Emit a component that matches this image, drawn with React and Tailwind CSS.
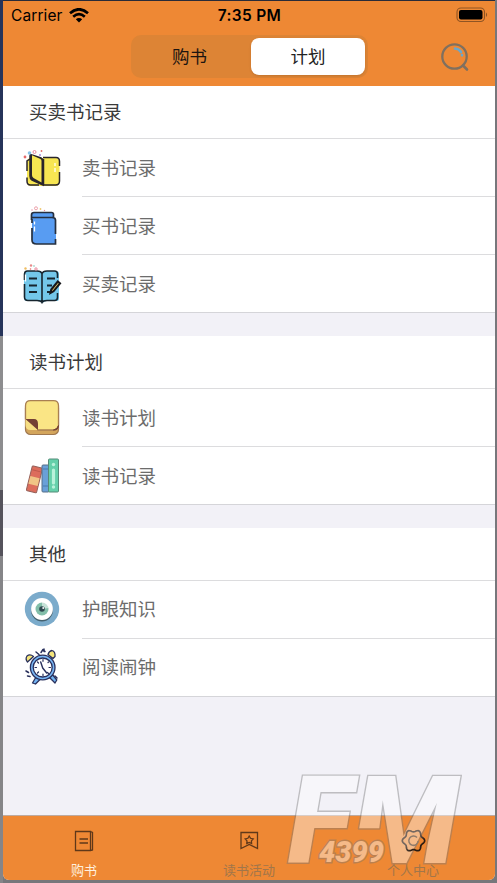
const YellowBook = () => (
  <svg width="40" height="40" viewBox="0 0 40 40" fill="none">
    <rect x="5" y="10" width="32.500" height="28" rx="4" fill="#F7E652" />
    <path d="M21 9.500h13q3.500 0 3.500 4v4.500M37.500 24v9q0 4-4 4H21M17 37H8.500q-3.500 0-3.500-4v-3.500M5 23V13l3-2" stroke="#29252b" strokeWidth="1.500" />
    <path d="M8 8q0-2 2-1l9 3q2 1 2 3v24l-11-5q-2-1-2-4z" fill="#29252b" stroke="#29252b" strokeWidth="1.500" />
    <path d="M10 7.200l8.500 3.800q1 .5 1 2v21.500l-8-4.500q-1.500-1-1.500-3z" fill="#F7E652" />
    <path d="M21.500 11v26" stroke="#29252b" strokeWidth="1.500" />
    <path d="M33 15v3M33 20v4" stroke="#fffbe0" strokeWidth="1.500" />
    <circle cx="3" cy="9" r="1.400" fill="#e46b6b" />
    <circle cx="7.500" cy="5" r="1.800" fill="#86c2e6" />
    <circle cx="12.500" cy="4" r="1.500" stroke="#e88b9e" />
    <circle cx="18" cy="7" r=".9" fill="#9a7ddb" />
    <circle cx="19.500" cy="3" r=".9" fill="#e46b6b" />
  </svg>
);

const BlueBook = () => (
  <svg width="40" height="40" viewBox="0 0 40 40" fill="none">
    <path d="M10 8q0-1.500 2-1.500h18q2 0 2 2V12l2 1v24q0 1-2 1H14q-4 0-4-4z" fill="#589CF2" />
    <path d="M9.500 14V9q0-2.500 2.500-2.500h17.500q2 0 2 2V11M10 11.500h20q3.500 0 3.500 2.500v14M33.500 33v5H14.500q-4.500 0-4.500-4V22M10 13v4" stroke="#26303f" strokeWidth="1.700" />
    <path d="M12.500 15.500v3M12.500 20.500v5" stroke="#fff" strokeWidth="1.300" />
    <circle cx="14" cy="2.300" r="1.500" stroke="#eba0aa" />
    <circle cx="18.500" cy="3" r=".9" fill="#efc86f" />
    <circle cx="22.500" cy="4.500" r=".7" fill="#e88b9e" />
    <circle cx="10" cy="4" r=".7" fill="#e88b9e" />
  </svg>
);

const OpenBook = () => (
  <svg width="40" height="40" viewBox="0 0 40 40" fill="none">
    <path d="M2 10q0-3 3-3h11q4 0 5 2 1-2 4-2h9q3 0 3 3v25q0 2-3 2h-9q-3 0-4.500 2-2-2-5-2H5q-3 0-3-3z" fill="#73C7EA" />
    <path d="M2.500 16v-5.500q0-3.500 3-3.500H15q4 0 5 2.500Q21 7 25 7h7.500q3 0 3 3v4M35.500 29v4.500q0 3-3 3H25q-4 0-5 2-1-2-5-2H6q-3.500 0-3.500-3.500V20M20 9.500v28" stroke="#17252e" strokeWidth="1.600" />
    <path d="M7 14.500h8M7 21.500h8M7 28h8M25 14.500h8M25 21.500h5M25 28h3" stroke="#17252e" strokeWidth="1.900" />
    <path d="M28.500 29l.8-3.500 6.500-8 2.200 1.800-6.500 8z" fill="#F2D06B" stroke="#17181c" strokeWidth="2.100" />
    <path d="M3.500 10.500v7" stroke="#fff" strokeWidth="1.300" />
    <circle cx="3.500" cy="4.500" r="1.200" fill="#efbd62" />
    <circle cx="9" cy="1.500" r="1.200" fill="#e88b8b" />
    <circle cx="14" cy="5" r="1.200" stroke="#e88b9e" />
    <circle cx="8.500" cy="5" r=".8" fill="#e46b6b" />
    <circle cx="12" cy="2" r=".7" fill="#59b9aa" />
  </svg>
);

const NoteIcon = () => (
  <svg width="40" height="40" viewBox="0 0 40 40">
    <rect x="3.500" y="5" width="33" height="31.500" rx="5" fill="#D3A55C" stroke="#A07850" strokeWidth="1.200" />
    <path d="M8.500 2.700h23q5 0 5 5V27q0 5-5 5H16L3.500 21V7.700q0-5 5-5z" fill="#FAE585" stroke="#A97F52" strokeWidth="1.300" />
    <path d="M3.500 21L16 32H8.500q-5 0-5-5z" fill="#F6DE83" />
    <path d="M3.500 21H12q4 0 4 5v6z" fill="#743F34" />
    <path d="M36.500 27.500q0 4.500-5 4.500 4-1 5-4.500z" fill="#743F34" stroke="#743F34" />
  </svg>
);

const BooksIcon = () => (
  <svg width="40" height="40" viewBox="0 0 40 40" fill="none">
    <g transform="rotate(14 12 24)" strokeWidth="1">
      <rect x="7" y="10.500" width="10.500" height="25.500" rx="1" fill="#DC6D5C" stroke="#94615a" />
      <path d="M7.500 21h9.500v8H7.500z" fill="#F0C586" />
      <path d="M8 14.500h8.500" stroke="#bd594c" />
    </g>
    <rect x="20" y="9" width="7" height="27" rx="1" fill="#6AA0D8" stroke="#566f89" />
    <path d="M21 13h5M21 30h5" stroke="#477ab0" />
    <rect x="26.500" y="3" width="10" height="33" rx="1" fill="#65D0AA" stroke="#548b78" />
    <path d="M31.500 14v13" stroke="#B9F2DA" strokeWidth="3.200" strokeLinecap="round" />
    <circle cx="31.500" cy="8.500" r="1.700" fill="#B9F2DA" />
    <circle cx="31.500" cy="31" r="1.700" fill="#B9F2DA" />
  </svg>
);

const EyeIcon = () => (
  <svg width="40" height="40" viewBox="0 0 40 40">
    <circle cx="20" cy="19" r="17.200" fill="#7BABCB" />
    <circle cx="20" cy="20.500" r="10.900" fill="#44616f" />
    <circle cx="20" cy="19" r="10.900" fill="#fff" />
    <circle cx="20" cy="19" r="6.500" fill="#82BEA9" />
    <path d="M20 19v-7h7v6z" fill="#fff" opacity=".55" />
    <circle cx="20" cy="19" r="2.800" fill="#304850" />
    <circle cx="21.200" cy="18" r=".9" fill="#fff" />
  </svg>
);

const ClockIcon = () => (
  <svg width="40" height="40" viewBox="0 0 40 40" fill="none" stroke="#29305c" strokeWidth="1.300" strokeLinecap="round" strokeLinejoin="round">
    <path d="M14 30l-3.500 6 3 1 5-5zM27 30l6 6 1.800-3-4-5z" fill="#72B4F2" />
    <path d="M5.500 15q-2.500-3-.5-6 3-2.500 6.500.5zM26 7.500q1-3.500 4-4 3.500 1 3 6l-2 2z" fill="#F5E57B" />
    <circle cx="20.700" cy="20.500" r="12.300" fill="#79B7F5" />
    <circle cx="20.700" cy="20.500" r="9.500" fill="#fff" />
    <path d="M20.700 21l-2-6M20.700 21l4 5" strokeWidth="1.400" />
    <path d="M21 12.500v1.800M21 27v1.500M13 20.500h1.500M27 20.500h1.500M15.500 15l1 1M25.500 25.500l1 1M15.500 26l1-1M26 15.500l.7-.7" strokeWidth="1.200" />
    <path d="M14 5l3 2.500M19 5.500l2-3 2 2M22 2v2.500M4 24l2.500 1.500M5.500 29l2.500.5M33 29l2 2" strokeWidth="1.500" />
  </svg>
);

const sections = [
  {
    title: '买卖书记录',
    gapClass: 'mb-[23px]',
    rows: [
      { label: '卖书记录', Icon: YellowBook },
      { label: '买书记录', Icon: BlueBook },
      { label: '买卖记录', Icon: OpenBook },
    ],
  },
  {
    title: '读书计划',
    gapClass: 'mb-[22.5px]',
    rows: [
      { label: '读书计划', Icon: NoteIcon },
      { label: '读书记录', Icon: BooksIcon },
    ],
  },
  {
    title: '其他',
    gapClass: '',
    rows: [
      { label: '护眼知识', Icon: EyeIcon },
      { label: '阅读闹钟', Icon: ClockIcon },
    ],
  },
];

function StatusBar() {
  return (
    <div className="grid h-[29px] grid-cols-3 items-center pl-[8px] pr-[7px] font-['Inter',sans-serif] text-black">
      <div className="flex items-center gap-[6px] text-[15.5px] tracking-[0.1px]">
        Carrier
        <svg width="20" height="15" viewBox="0 0 20 15" fill="none" stroke="#000" strokeWidth="2.700">
          <path d="M1 5.300q9-8 18 0M4.200 8.700q5.800-5 11.600 0" />
          <path d="M10 14.500l-3.200-3.200q3.200-2.600 6.400 0z" fill="#000" stroke="none" />
        </svg>
      </div>
      <div className="text-center text-[15.5px] font-semibold tracking-[0.3px]">7:35 PM</div>
      <svg className="mb-[2px] justify-self-end" width="32" height="16" viewBox="0 0 32 16">
        <rect x="1" y="1" width="27.500" height="13.500" rx="4" fill="none" stroke="#8f5423" strokeWidth="1.100" />
        <rect x="3" y="3" width="23.500" height="9.500" rx="2" fill="#000" />
        <path d="M30 5.500q2.200 2.200 0 4.500z" fill="#8f5423" />
      </svg>
    </div>
  );
}

function Header() {
  return (
    <header className="h-[85px] shrink-0 bg-[#EE8834]">
      <StatusBar />
      <div className="flex items-start justify-between pl-[128px] pr-[25px] pt-[5px]">
        <div className="flex h-[43px] w-[237px] rounded-[10px] bg-[#DD8435] p-[3px] text-[17.5px] text-[#1c1410]">
          <div className="flex flex-1 items-center justify-center pr-[7px] pl-[1px]">购书</div>
          <div className="flex w-[114px] items-center justify-center rounded-[8px] bg-white text-[#222] shadow">计划</div>
        </div>
        <svg className="mt-[6px]" width="30" height="32" viewBox="0 0 30 32" fill="none" strokeLinecap="round">
          <circle cx="14.500" cy="15.500" r="12.200" stroke="#80705f" strokeWidth="2.300" />
          <path d="M23 24.500l4 4" stroke="#80705f" strokeWidth="2.600" />
          <path d="M15 7.500q4 .3 6 3.500M22 14v.3" stroke="#69a7cd" strokeWidth="2.700" />
        </svg>
      </div>
    </header>
  );
}

function Section({ title, gapClass, rows }) {
  return (
    <section className={`bg-white ${gapClass}`}>
      <h2 className="flex h-[53px] items-center border-b border-[#dcdcde] pl-[26px] text-[18.5px] text-[#3a3a3a]">{title}</h2>
      {rows.map(({ label, Icon }, i) => {
        const last = i === rows.length - 1;
        return (
          <div key={label} className={`flex h-[58px] items-center pl-[19px] ${last ? 'border-b border-[#d5d5d9]' : ''}`}>
            <Icon />
            <div className={`ml-[20px] flex h-full flex-1 items-center text-[18.5px] text-[#6c6c6c] ${last ? '' : 'border-b border-[#dcdcde]'}`}>
              {label}
            </div>
          </div>
        );
      })}
    </section>
  );
}

function TabBar() {
  return (
    <nav className="grid h-[65px] shrink-0 grid-cols-3 border-t border-[#bdaaa0] bg-[#EE8834] pt-[13px] text-[13px] leading-[20px] text-[#a1764a]">
      <div className="flex flex-col items-center gap-[7px] pr-[2px] text-[#fff0df]">
        <svg width="24" height="24" viewBox="0 0 24 24" fill="none" stroke="#5f3819" strokeWidth="1.300">
          <path d="M3.500 2.500h15v19h-15zM18.500 2.500l2 1v17.500l-2 .5M7.500 10H16M7.500 14H16" />
        </svg>
        购书
      </div>
      <div className="flex flex-col items-center gap-[7px]">
        <svg width="24" height="24" viewBox="0 0 24 24" fill="none" stroke="#5f3819" strokeWidth="1.300">
          <path d="M4 3.500h16.500v16l-8.250-4-8.250 4z" />
          <path d="M12.200 7l1.300 2.300 2.700.6-1.800 2 .2 2.600-2.400-1-2.400 1 .2-2.600-1.800-2 2.700-.6z" />
        </svg>
        读书活动
      </div>
      <div className="flex flex-col items-center gap-[7px]">
        <svg width="24" height="24" viewBox="0 0 24 24" fill="none" />
        个人中心
      </div>
    </nav>
  );
}

// Six-lobed outline of the settings gear
const gearPath = Array.from({ length: 72 }, (_, i) => {
  const a = (i * Math.PI) / 36;
  const r = 10 + 1.2 * Math.cos(6 * a);
  return `${i ? 'L' : 'M'}${(413.5 + r * Math.cos(a)).toFixed(2)} ${(840.7 + r * Math.sin(a)).toFixed(2)}`;
}).join('') + 'Z';

function Watermark() {
  return (
    <svg
      className="pointer-events-none absolute left-[280px] top-[755px] overflow-visible"
      width="195"
      height="128"
      viewBox="280 755 195 128"
      fontFamily="Roboto, sans-serif"
      fontStyle="italic"
      fontWeight="900"
    >
      <defs>
        <clipPath id="mark-m">
          <path d="M340 755h140v128h-95V829h-45z" />
        </clipPath>
        <linearGradient id="gear-shade" x1="0" y1="0" x2="1" y2="1">
          <stop offset=".45" stopColor="#75675f" />
          <stop offset=".7" stopColor="#2b1c12" />
        </linearGradient>
      </defs>
      <g fill="#fff" stroke="#777" strokeWidth="2.800" paintOrder="stroke" opacity=".42">
        <text x="288" y="863" fontSize="122" textLength="64" lengthAdjust="spacingAndGlyphs">F</text>
        <text x="353" y="863" fontSize="122" textLength="105" lengthAdjust="spacingAndGlyphs" clipPath="url(#mark-m)">M</text>
        <path d="M358 829h22" strokeWidth="1.500" />
        <text x="319" y="862" fontSize="29" textLength="65" lengthAdjust="spacingAndGlyphs">4399</text>
      </g>
      <path d={gearPath} fill="none" stroke="url(#gear-shade)" strokeWidth="1.700" />
      <path d="M417 837.500a4.700 4.700 0 1 0 1.200 3.500" fill="none" stroke="#8f7b6b" strokeWidth="1.500" />
    </svg>
  );
}

export default function App() {
  return (
    <div className="relative flex h-[883px] w-[497px] overflow-hidden bg-[#77777b] font-['Noto_Sans_CJK_SC',sans-serif]">
      <div className="flex w-[3px] shrink-0 flex-col">
        <div className="h-[336px] bg-[#26345a]" />
        <div className="h-[154px] bg-[#8d8d8f]" />
        <div className="h-[66px] bg-[#55535c]" />
        <div className="flex-1 bg-[#858588]" />
      </div>
      <div className="flex w-[492px] flex-col border-t border-[#292b38]">
        <div className="flex h-[879px] flex-col overflow-hidden rounded-b-[6px] bg-[#F2F1F7]">
          <Header />
          <main className="flex-1">
            {sections.map((section) => (
              <Section key={section.title} {...section} />
            ))}
          </main>
          <TabBar />
        </div>
      </div>
      <Watermark />
    </div>
  );
}
